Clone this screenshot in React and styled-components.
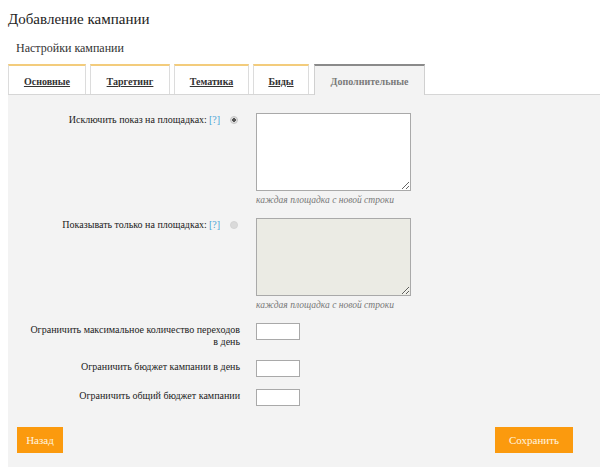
import React from 'react';
import styled, { createGlobalStyle, css } from 'styled-components';

const GlobalStyle = createGlobalStyle`
  html, body {
    margin: 0;
    padding: 0;
    background: #fff;
  }
  body {
    font-family: "Liberation Serif", "Times New Roman", serif;
    color: #222;
  }
`;

const tabs = [
  { id: 'main', label: 'Основные', width: 78 },
  { id: 'target', label: 'Таргетинг', width: 80 },
  { id: 'theme', label: 'Тематика', width: 75 },
  { id: 'bids', label: 'Биды', width: 56 },
  { id: 'extra', label: 'Дополнительные', width: 111, active: true },
];

export default function App() {
  return (
    <Page>
      <GlobalStyle />
      <Title>Добавление кампании</Title>
      <Subtitle>Настройки кампании</Subtitle>

      <TabBar>
        {tabs.map((tab) => (
          <Tab key={tab.id} active={tab.active} style={{ width: tab.width }}>
            <TabLink active={tab.active}>{tab.label}</TabLink>
          </Tab>
        ))}
      </TabBar>

      <Panel>
        <Form>
          <Label>
            Исключить показ на площадках: <Help>[?]</Help>
            <Radio checked />
          </Label>
          <Field>
            <TextArea />
            <Hint>каждая площадка с новой строки</Hint>
          </Field>

          <Label>
            Показывать только на площадках: <Help>[?]</Help>
            <Radio />
          </Label>
          <Field>
            <TextArea disabled />
            <Hint>каждая площадка с новой строки</Hint>
          </Field>

          <SmallLabel>Ограничить максимальное количество переходов в день</SmallLabel>
          <Field>
            <Input />
          </Field>

          <SmallLabel>Ограничить бюджет кампании в день</SmallLabel>
          <Field>
            <Input />
          </Field>

          <SmallLabel>Ограничить общий бюджет кампании</SmallLabel>
          <Field>
            <Input />
          </Field>
        </Form>

        <Actions>
          <Button $width={46}>Назад</Button>
          <Button $width={78}>Сохранить</Button>
        </Actions>
      </Panel>
    </Page>
  );
}

const Page = styled.div`
  padding: 9px 0 0 8px;
  width: 592px;
  height: 458px;
  overflow: hidden;
`;

const Title = styled.h1`
  margin: 0;
  font-size: 15px;
  font-weight: normal;
  line-height: 20px;
  color: #222;
`;

const Subtitle = styled.div`
  margin: 11px 0 0 8px;
  font-size: 12px;
  line-height: 16px;
  color: #333;
`;

const TabBar = styled.div`
  display: flex;
  gap: 4px;
  margin-top: 8px;
  height: 30px;
  border-bottom: 1px solid #d6d6d6;
`;

const Tab = styled.div`
  display: flex;
  align-items: center;
  justify-content: center;
  box-sizing: border-box;
  height: 30px;
  background: #fff;
  border: 1px solid #dcdcdc;
  border-top: 2px solid #f3cc7c;
  border-bottom: none;

  ${(props) =>
    props.active &&
    css`
      height: 31px;
      background: #f3f3f3;
      border-top-color: #8a8a8a;
      border-left-color: #d0d0d0;
      border-right-color: #d0d0d0;
      margin-left: 1px;
    `}
`;

const TabLink = styled.span`
  font-size: 10px;
  font-weight: bold;
  color: #333;
  text-decoration: underline;
  padding-top: 2px;

  ${(props) =>
    props.active &&
    css`
      color: #7a7a7a;
      text-decoration: none;
    `}
`;

const Panel = styled.div`
  background: #f3f3f3;
  padding: 18px 0 14px 0;
  height: 100%;
`;

const Form = styled.div`
  display: grid;
  grid-template-columns: 232px 1fr;
  column-gap: 16px;
  row-gap: 12px;
  align-items: start;
`;

const Label = styled.div`
  display: flex;
  justify-content: flex-end;
  align-items: center;
  gap: 6px;
  font-size: 10px;
  line-height: 14px;
  color: #222;
  white-space: nowrap;
`;

const SmallLabel = styled.div`
  font-size: 10px;
  line-height: 12px;
  text-align: right;
  color: #222;
  padding: 1px 0 0 18px;
`;

const Help = styled.span`
  color: #4aa3d6;
  font-size: 10px;
  margin-left: -4px;
`;

const Radio = styled.span`
  width: 8px;
  height: 8px;
  border-radius: 50%;
  margin-left: 4px;
  margin-right: 2px;
  box-sizing: border-box;
  background: ${(props) => (props.checked ? 'radial-gradient(circle, #555 0 1.6px, #ddd 2px)' : '#dadada')};
  border: 1px solid ${(props) => (props.checked ? '#c4c4c4' : '#d4d4d4')};
`;

const Field = styled.div`
  display: flex;
  flex-direction: column;
  align-items: flex-start;
`;

const TextArea = styled.textarea`
  box-sizing: border-box;
  width: 155px;
  height: 78px;
  margin: 0;
  border: 1px solid #a9a9a9;
  background: #fff;
  resize: both;

  &:disabled {
    background: #ebebe4;
  }
`;

const Hint = styled.span`
  margin-top: 3px;
  font-size: 9.5px;
  font-style: italic;
  color: #777;
  line-height: 12px;
`;

const Input = styled.input`
  box-sizing: border-box;
  width: 44px;
  height: 17px;
  margin: 0;
  border: 1px solid #a9a9a9;
  background: #fff;
`;

const Actions = styled.div`
  display: flex;
  justify-content: space-between;
  padding: 0 27px 0 9px;
  margin-top: 21px;
`;

const Button = styled.button`
  width: ${(props) => props.$width}px;
  height: 26px;
  padding: 0;
  border: none;
  background: #fb9a0e;
  color: #fff6e0;
  font-family: "Liberation Serif", "Times New Roman", serif;
  font-size: 11px;
  cursor: pointer;
`;
